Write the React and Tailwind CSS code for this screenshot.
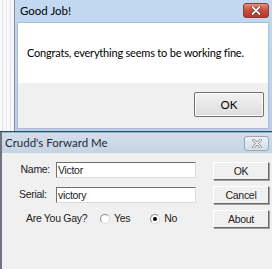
import React from 'react'

const SEGOE = { fontFamily: 'Lato, "Open Sans", sans-serif' }

function GoodJob() {
  return (
    <div className="flex h-[131px] bg-[#f7f8f9]">
      {/* desktop strip on the left */}
      <div className="w-[14px] shrink-0 flex gap-[3px] pl-[2px]">
        <div className="w-px bg-[#e4e6e8]" />
        <div className="w-px bg-[#eceef0]" />
        <div className="w-px bg-[#e4e6e8]" />
      </div>
      <div className="flex-1 min-w-0 flex flex-col border-l border-[#7d8fa4] bg-[#c6dbf1]">
        <div className="flex-1 flex flex-col pl-[2px] pr-[3px] pb-[2px] bg-gradient-to-b from-[#c3d9f1] to-[#b7cfe8]">
          <div className="h-[22px] flex items-center justify-between">
            <span className="text-[11.5px] text-black pl-[3px]" style={SEGOE}>Good Job!</span>
            <div className="w-[26px] h-[15px] mb-[2px] rounded-[3px] border border-[#8a3a33] bg-gradient-to-b from-[#e48e7f] via-[#c94a3b] to-[#b8392b] flex items-center justify-center">
              <svg width="10" height="9" viewBox="0 0 10 9">
                <path d="M1.5 1 L8.5 8 M8.5 1 L1.5 8" stroke="#4d1a14" strokeWidth="3" strokeLinecap="round" />
                <path d="M1.5 1 L8.5 8 M8.5 1 L1.5 8" stroke="#ffffff" strokeWidth="1.8" strokeLinecap="round" />
              </svg>
            </div>
          </div>
          <div className="flex-1 flex flex-col border border-[#a9bdd4]">
            <div className="h-[60px] bg-white flex items-center pl-[9px] pt-[1px]">
              <span className="text-[11px] tracking-[-0.2px] text-black whitespace-nowrap" style={SEGOE}>Congrats, everything seems to be working fine.</span>
            </div>
            <div className="flex-1 bg-[#f0f0f0] flex justify-end items-start pt-[9px] pr-[4px]">
              <button className="w-[70px] h-[25px] border border-[#707070] rounded-[2px] bg-gradient-to-b from-[#f2f2f2] to-[#dddddd] text-[11.5px] text-black shadow-[inset_0_0_0_1px_#fcfcfc]" style={SEGOE}>OK</button>
            </div>
          </div>
        </div>
      </div>
    </div>
  )
}

function ClassicButton({ children }) {
  return (
    <button className="w-[56px] h-[18px] bg-[#f0f0f0] text-[10.5px] text-[#222] border border-t-white border-l-white border-r-[#696969] border-b-[#696969] shadow-[1px_1px_0_#a0a0a0] leading-none">
      {children}
    </button>
  )
}

function Radio({ checked }) {
  return (
    <span className="w-[10px] h-[10px] rounded-full bg-white border border-t-[#8a8a8a] border-l-[#8a8a8a] border-r-[#d8d8d8] border-b-[#d8d8d8] flex items-center justify-center">
      {checked && <span className="w-[4px] h-[4px] rounded-full bg-black" />}
    </span>
  )
}

function Crudd() {
  const font = { fontFamily: '"Liberation Sans", Arial, sans-serif' }
  return (
    <div className="flex-1 flex flex-col border-l-2 border-[#6f7480] bg-[#f0f0f0]" style={font}>
      <div className="h-[21px] flex items-center justify-between bg-gradient-to-b from-[#d4deea] to-[#c5d3e3] pl-[3px] pr-[3px] border-t border-[#9fb1c6]">
        <span className="text-[11.5px] text-[#1e2a3a]" style={SEGOE}>Crudd's Forward Me</span>
        <div className="w-[25px] h-[15px] rounded-[3px] border border-[#9aa7b6] bg-gradient-to-b from-[#eef2f6] to-[#d4dce6] flex items-center justify-center">
          <svg width="10" height="9" viewBox="0 0 10 9">
            <path d="M1.5 1 L8.5 8 M8.5 1 L1.5 8" stroke="#7b8591" strokeWidth="2.6" strokeLinecap="round" />
            <path d="M1.5 1 L8.5 8 M8.5 1 L1.5 8" stroke="#f4f6f8" strokeWidth="1.2" strokeLinecap="round" />
          </svg>
        </div>
      </div>
      <div className="flex pt-[9px] pl-[16px] tracking-[-0.3px]">
        <div className="flex flex-col">
          <div className="grid grid-cols-[38px_140px] gap-y-[9px] items-center">
            <span className="text-[10.5px] text-[#222] text-right pr-[6px]">Name:</span>
            <div className="h-[16px] bg-white border border-t-[#707070] border-l-[#707070] border-r-[#dcdcdc] border-b-[#dcdcdc] text-[10.5px] leading-[14px] pl-[1px] text-[#222]">Victor</div>
            <span className="text-[10.5px] text-[#222] pl-[1px]">Serial:</span>
            <div className="h-[16px] bg-white border border-t-[#707070] border-l-[#707070] border-r-[#dcdcdc] border-b-[#dcdcdc] text-[10.5px] leading-[14px] pl-[1px] text-[#222]">victory</div>
          </div>
          <div className="flex items-center text-[10.5px] text-[#222] mt-[8px] pl-[8px]">
            <span className="w-[74px] shrink-0 whitespace-nowrap">Are You Gay?</span>
            <span className="flex items-center gap-[4px]"><Radio /> Yes</span>
            <span className="ml-[20px] flex items-center gap-[4px]"><Radio checked /> No</span>
          </div>
        </div>
        <div className="flex flex-col gap-[6px] ml-[17px]">
          <ClassicButton>OK</ClassicButton>
          <ClassicButton>Cancel</ClassicButton>
          <ClassicButton>About</ClassicButton>
        </div>
      </div>
    </div>
  )
}

export default function App() {
  return (
    <div className="w-[272px] h-[269px] overflow-hidden flex flex-col bg-[#f0f0f0]">
      <GoodJob />
      <div className="h-px bg-[#1f5660]" />
      <Crudd />
    </div>
  )
}
